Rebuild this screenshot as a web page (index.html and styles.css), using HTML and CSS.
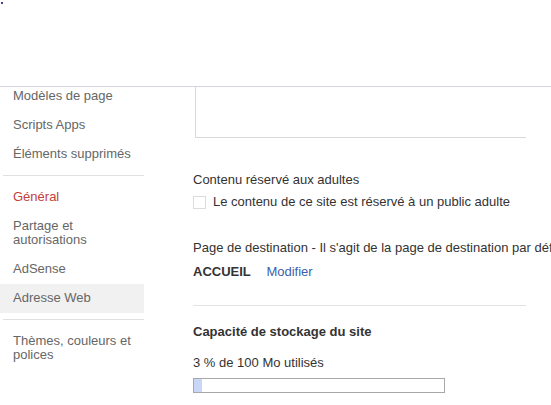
FILE: index.html
```html
<!DOCTYPE html>
<html lang="fr">
<head>
    <meta charset="UTF-8">
    <meta name="viewport" content="width=device-width, initial-scale=1.0">
    <title>Gérer le site</title>
    <link rel="stylesheet" href="styles.css">
</head>
<body>
    <div class="header">
        <span class="dot"></span>
    </div>
    <div class="layout">
        <ul class="sidebar">
            <li class="nav-item">Modèles de page</li>
            <li class="nav-item">Scripts Apps</li>
            <li class="nav-item">Éléments supprimés</li>
            <li class="separator"></li>
            <li class="nav-item active">Général</li>
            <li class="nav-item">Partage et<br>autorisations</li>
            <li class="nav-item">AdSense</li>
            <li class="nav-item selected">Adresse Web</li>
            <li class="separator"></li>
            <li class="nav-item">Thèmes, couleurs et<br>polices</li>
        </ul>
        <div class="main">
            <div class="textbox"></div>

            <div class="label adult-title">Contenu réservé aux adultes</div>
            <label class="check-row">
                <input type="checkbox" class="check">
                <span>Le contenu de ce site est réservé à un public adulte</span>
            </label>

            <div class="label landing-title">Page de destination - Il s'agit de la page de destination par défaut de votre site</div>
            <div class="landing-row">
                <span class="landing-page">ACCUEIL</span>
                <a class="link" href="#">Modifier</a>
            </div>

            <div class="rule"></div>

            <div class="label storage-title">Capacité de stockage du site</div>
            <div class="label storage-text">3 % de 100 Mo utilisés</div>
            <div class="bar">
                <div class="bar-fill" style="width: 3%;"></div>
            </div>
        </div>
    </div>
</body>
</html>
```

FILE: styles.css
```css
body {
    font-family: "Liberation Sans", Arial, sans-serif;
    font-size: 13px;
    color: #333;
    background-color: white;
    margin: 0;
    overflow: hidden;
}
.header {
    box-sizing: border-box;
    height: 87px;
    padding: 2px 0 0 1px;
    border-bottom: 1px solid #d5d4dd;
}
.dot {
    display: block;
    width: 2px;
    height: 2px;
    background-color: #4a3a9a;
}
.layout {
    display: flex;
}
.sidebar {
    list-style: none;
    margin: -5px 0 0 0;
    padding: 0;
    width: 144px;
    flex-shrink: 0;
}
.nav-item {
    padding: 7px 13px 8px;
    line-height: 14px;
    color: #666;
}
.nav-item.active {
    color: #c4403a;
}
.nav-item.selected {
    background-color: #f1f1f1;
}
.separator {
    height: 1px;
    margin: 6px 0 7px 3px;
    background-color: #e0e0e0;
}
.main {
    padding-left: 49px;
    flex: 1;
    min-width: 0;
    overflow: hidden;
}
.textbox {
    width: 330px;
    height: 50px;
    margin-left: 2px;
    border-left: 1px solid #d9d9d9;
    border-bottom: 1px solid #d9d9d9;
}
.label {
    line-height: 16px;
    white-space: nowrap;
}
.adult-title {
    margin-top: 34px;
}
.check-row {
    display: flex;
    align-items: center;
    gap: 7px;
    margin-top: 6px;
    line-height: 16px;
}
.check {
    appearance: none;
    width: 13px;
    height: 13px;
    margin: 0;
    border: 1px solid #dcdcdc;
    background-color: white;
}
.landing-title {
    margin-top: 30px;
}
.landing-row {
    margin-top: 8px;
    line-height: 16px;
}
.landing-page {
    font-weight: bold;
}
.link {
    margin-left: 12px;
    color: #3d5faa;
    text-decoration: none;
}
.rule {
    width: 333px;
    height: 1px;
    margin-top: 25px;
    background-color: #e3e3e3;
}
.storage-title {
    margin-top: 18px;
    font-weight: bold;
}
.storage-text {
    margin-top: 15px;
}
.bar {
    width: 250px;
    height: 13px;
    margin-top: 7px;
    border: 1px solid #a8a8a8;
}
.bar-fill {
    height: 100%;
    background-color: #c9d6f5;
}
```
